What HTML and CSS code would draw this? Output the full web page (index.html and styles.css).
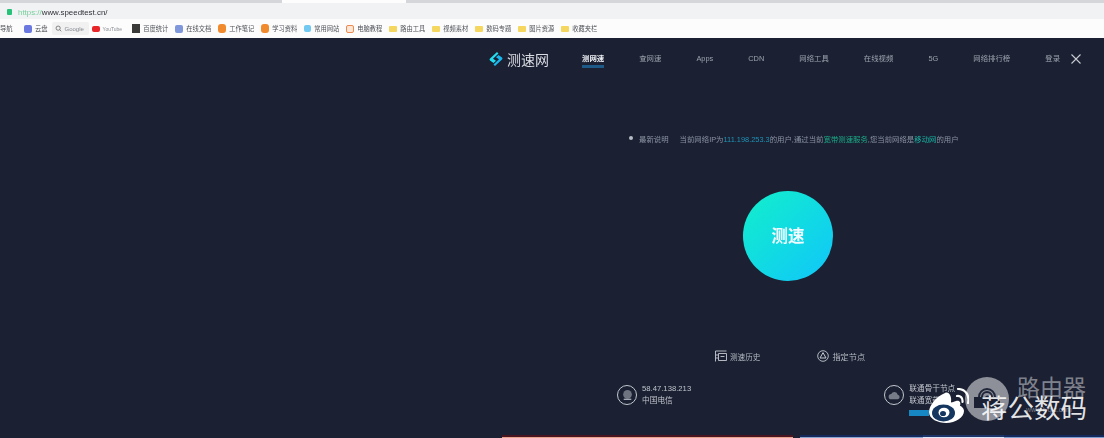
FILE: index.html
```html
<!DOCTYPE html>
<html lang="zh-CN">
<head>
<meta charset="UTF-8">
<title>测速网</title>
<link rel="stylesheet" href="styles.css">
</head>
<body>

<div id="shot">
  <div id="tabstrip"><div class="tab"></div></div>

  <div id="addressbar">
    <span class="lock"></span>
    <span class="url"><span class="scheme">https://</span>www.speedtest.cn/</span>
  </div>

  <div id="bookmarks">
    <span class="mark cut">导航</span>
    <span class="mark"><i class="ico blue"></i>云盘</span>
    <span class="mark google"><svg class="ico-g" viewBox="0 0 10 10"><circle cx="4.5" cy="4.5" r="3" fill="none" stroke="#666" stroke-width="1.1"/><path d="M6.7 6.7 9 9" stroke="#666" stroke-width="1.1"/></svg>Google</span>
    <span class="mark latin"><i class="ico red"></i>YouTube</span>
    <span class="mark"><i class="ico qr"></i>百度统计</span>
    <span class="mark"><i class="ico doc"></i>在线文档</span>
    <span class="mark"><i class="ico orange"></i>工作笔记</span>
    <span class="mark"><i class="ico orange"></i>学习资料</span>
    <span class="mark"><i class="ico sky"></i>常用网站</span>
    <span class="mark"><i class="ico frame"></i>电脑教程</span>
    <span class="mark"><i class="ico folder"></i>路由工具</span>
    <span class="mark"><i class="ico folder"></i>视频素材</span>
    <span class="mark"><i class="ico folder"></i>数码专题</span>
    <span class="mark"><i class="ico folder"></i>图片资源</span>
    <span class="mark"><i class="ico folder"></i>收藏夹栏</span>
  </div>

  <div id="main">
    <div id="page">
      <div id="header">
        <div class="logo">
          <svg class="logo-ico" viewBox="0 0 14 14">
            <path d="M8 0 1 6.5Q0 7.5 1 8.5L4.500 11 7 8.800 4 6.800 9.500 1.500Z" fill="#23dced"/>
            <path d="M6 14 13 7.500Q14 6.500 13 5.500L9.500 3 7 5.200 10 7.200 4.500 12.500Z" fill="#18b8ee"/>
          </svg>
          <span>测速网</span>
        </div>
        <nav class="nav">
          <a class="active">测网速</a>
          <a>查网速</a>
          <a>Apps</a>
          <a>CDN</a>
          <a>网络工具</a>
          <a>在线视频</a>
          <a>5G</a>
          <a>网络排行榜</a>
          <a>登录</a>
        </nav>
        <svg class="close" viewBox="0 0 10 10"><path d="M.5.5l9 9M9.5.5l-9 9" stroke="#c9ccd3" stroke-width="1.1"/></svg>
      </div>

      <div class="notice">
        <span class="dot"></span>
        <span class="notice-head">最新说明</span>
        <span>当前网络IP为<b class="blue-t">111.198.253.3</b>的用户,通过当前<b class="green-t">宽带测速服务</b>,您当前网络是<b class="teal-t">移动网</b>的用户</span>
      </div>

      <button class="go">测速</button>

      <div class="tools">
        <span class="tool">
          <svg viewBox="0 0 12 12"><path d="M.5 1h11M.5 1v10.500M3.500 3.500h8v7h-8zM.5 5h3M.5 8h3M5.500 6.500h4" fill="none" stroke="#c4c8d0" stroke-width=".9"/></svg>
          测速历史
        </span>
        <span class="tool">
          <svg viewBox="0 0 12 12"><circle cx="6" cy="6" r="5.300" fill="none" stroke="#c4c8d0" stroke-width=".9"/><path d="M6 2.600 9 8H3Z" fill="none" stroke="#c4c8d0" stroke-width="1"/></svg>
          <span class="wide">指定节点</span>
        </span>
      </div>

      <div class="status">
        <div class="stat">
          <span class="ring"><svg viewBox="0 0 12 12"><circle cx="6" cy="5" r="4" fill="#6e7480"/><path d="M2.500 9.500h7" stroke="#aab0ba" stroke-width="1.2"/></svg></span>
          <div class="stat-text">
            <span>58.47.138.213</span>
            <span>中国电信</span>
          </div>
        </div>
        <div class="stat">
          <span class="ring"><svg viewBox="0 0 12 12"><path d="M3 9.500a2.400 2.400 0 0 1 0-4.800 3.200 3.200 0 0 1 6 .5 2.200 2.200 0 0 1 0 4.300Z" fill="#767c88"/></svg></span>
          <div class="stat-text">
            <span>联通骨干节点</span>
            <span>联通宽带</span>
            <span class="change"></span>
          </div>
        </div>
      </div>
    </div>
  </div>

  <div id="nextshot">
    <i class="seg s-dark"></i>
    <i class="seg s-red"></i>
    <i class="seg s-gap"></i>
    <i class="seg s-blue"></i>
    <i class="seg s-pale"></i>
    <i class="seg s-blue2"></i>
  </div>
</div>

<!-- watermark sits on top of the screenshot -->
<div class="wm-badge">
  <svg viewBox="0 0 44 44"><path d="M17 20a5 5 0 0 1 10 0M14 20a8 8 0 0 1 16 0v0M21 21a1.500 1.500 0 0 1 3 0" fill="none" stroke="#20263a" stroke-width="2"/></svg>
</div>
<div class="wm-box"></div>
<div class="wm-weibo">
  <svg viewBox="0 0 40 36">
    <path d="M16 5C8 8 0 17 0 24c0 7 9 11 17 11 10 0 18-6 18-12 0-3-3-5-4-5 1-3 0-6-4-5-3 1-5 2-5 1 1-5-2-11-6-9Z" fill="#fff"/>
    <ellipse cx="14.500" cy="25" rx="11.500" ry="8.500" fill="#14365f"/>
    <ellipse cx="15" cy="24.500" rx="5.500" ry="4.800" fill="#fff"/>
    <ellipse cx="14" cy="25.500" rx="3" ry="2.600" fill="#14365f"/>
    <path d="M28 8c3-.5 6 1.500 5.500 6M29 1c7 0 12 6 10 14" fill="none" stroke="#fff" stroke-width="2.200" stroke-linecap="round"/>
  </svg>
</div>
<div class="wm-sub">路由器</div>
<div class="wm-main">蒋公数码</div>
<div class="wm-url">www.lyqjc.com</div>

</body>
</html>
```

FILE: styles.css
```css
* { margin: 0; padding: 0; box-sizing: border-box; }

html, body { height: 100%; overflow: hidden; }

body {
  font-family: "Liberation Sans", "Noto Sans CJK SC", sans-serif;
  background: #1b2032;
  position: relative;
}

/* the reference is a blown up photo of a screen, everything is a bit soft */
#shot {
  height: 100vh;
  display: flex;
  flex-direction: column;
  filter: blur(0.45px);
}

#tabstrip {
  height: 3px;
  background: #d4d6da;
  padding-left: 282px;
  flex-shrink: 0;
}
.tab { width: 124px; height: 3px; background: #fdfdfd; }

#addressbar {
  height: 16px;
  padding-top: 2px;
  background: #f1f2f4;
  display: flex;
  align-items: center;
  gap: 6px;
  padding-left: 7px;
  flex-shrink: 0;
}
.lock { width: 5px; height: 6px; border-radius: 1px; background: #27c27a; }
.url { font-size: 7.9px; color: #2e3035; }
.scheme { color: #77cf9c; }

#bookmarks {
  height: 19px;
  background: #fcfcfc;
  display: flex;
  align-items: center;
  gap: 7px;
  flex-shrink: 0;
}
.mark {
  display: flex;
  align-items: center;
  gap: 3px;
  font-size: 6.25px;
  color: #4e5157;
  white-space: nowrap;
}
.mark.latin { color: #8a8d92; font-size: 5px; }
.mark.cut { width: 17px; }
.google {
  width: 37px;
  height: 13px;
  padding-left: 3px;
  background: #f1f1f2;
  border-radius: 2px;
  color: #85888e;
  font-size: 6px;
  margin-left: -3px;
  margin-right: -4px;
}
.ico-g { width: 7px; height: 7px; }
.ico { width: 8px; height: 8px; display: block; border-radius: 2px; }
.ico.blue { background: #6a78e0; }
.ico.red { background: #e8262a; height: 6px; border-radius: 2px; }
.ico.qr { background: #3a3a38; height: 9px; border-radius: 0; margin-left: 3px; }
.ico.doc { background: #7f98dc; }
.ico.orange { background: #f08a2c; border-radius: 3px; height: 9px; }
.ico.sky { background: #71c8f0; width: 7px; height: 7px; }
.ico.frame { background: #fbe6d8; border: 1.5px solid #ee8a50; }
.ico.folder { background: #f5d65e; height: 6px; border-radius: 1px; }

#main { flex: 1; background: #1b2032; min-height: 0; }

#page { width: 632px; margin-left: auto; }

#header {
  height: 42px;
  display: flex;
  align-items: center;
  padding-left: 17px;
}
.logo { display: flex; align-items: center; gap: 4px; }
.logo-ico { width: 14px; height: 14px; }
.logo span { font-size: 14px; color: #d9dce3; }

.nav {
  display: flex;
  align-items: center;
  gap: 35px;
  margin-left: 33px;
}
.nav a {
  font-size: 7.4px;
  line-height: 10px;
  color: #9da2ae;
  padding: 3px 0 1px;
  border-bottom: 3px solid transparent;
  white-space: nowrap;
}
.nav a.active {
  color: #eef0f4;
  font-weight: bold;
  border-bottom-color: #1d5a88;
}
.close { width: 10px; height: 10px; margin-left: 11px; }

.notice {
  display: flex;
  align-items: center;
  height: 10px;
  margin-top: 53px;
  padding-left: 157px;
  font-size: 7.4px;
  color: #8b93a3;
  white-space: nowrap;
}
.notice b { font-weight: normal; }
.dot { width: 4px; height: 4px; border-radius: 50%; background: #b7bcc6; margin-right: 6px; }
.notice-head { margin-right: 11px; }
.blue-t { color: #1f93b8; }
.green-t { color: #1bab88; }
.teal-t { color: #19b5a4; }

.go {
  display: block;
  width: 90px;
  height: 90px;
  margin: 48px auto 0;
  padding-bottom: 3px;
  border: none;
  border-radius: 50%;
  background: linear-gradient(135deg, #12efcb, #10c6fa);
  color: #f2fbff;
  font-family: inherit;
  font-size: 16.5px;
  font-weight: bold;
}

.tools {
  display: flex;
  gap: 57px;
  height: 12px;
  margin-top: 69px;
  padding-left: 243px;
}
.tool {
  display: flex;
  align-items: center;
  gap: 3px;
  font-size: 7.6px;
  color: #b3b7c0;
}
.tool .wide { font-size: 8.2px; }
.tool svg { width: 12px; height: 12px; }

.status {
  display: flex;
  gap: 193px;
  margin-top: 22px;
  padding-left: 145px;
}
.stat { display: flex; gap: 5px; align-items: flex-start; }
.ring {
  width: 20px;
  height: 20px;
  margin-top: 1px;
  border: 1px solid #c3c7cf;
  border-radius: 50%;
  display: flex;
  align-items: center;
  justify-content: center;
}
.ring svg { width: 13px; height: 13px; }
.stat-text {
  display: flex;
  flex-direction: column;
  gap: 2px;
  font-size: 7.7px;
  line-height: 10px;
  color: #c0c4cc;
}
.change { width: 20px; height: 6px; margin-top: 2px; background: #1788c4; }

#nextshot {
  height: 3px;
  display: flex;
  flex-shrink: 0;
}
.seg { display: block; height: 3px; border-top: 2px solid; }
.s-dark { width: 502px; background: #1b2032; border-color: #1b2032; }
.s-red { width: 291px; background: #e9a48e; border-color: #4a1520; }
.s-gap { width: 7px; background: #1b2032; border-color: #1b2032; }
.s-blue { width: 123px; background: #8aa6d0; border-color: #14285c; }
.s-pale { width: 81px; background: #dce6f6; border-color: #1d3468; }
.s-blue2 { flex: 1; background: #7b9ccc; border-color: #14285c; }

/* watermark */
.wm-weibo { position: absolute; left: 929px; top: 388px; width: 40px; height: 36px; }
.wm-weibo svg { width: 100%; height: 100%; display: block; }
.wm-badge {
  position: absolute;
  left: 965px;
  top: 377px;
  width: 44px;
  height: 44px;
  border-radius: 50%;
  background: rgba(255, 255, 255, 0.5);
}
.wm-badge svg { width: 100%; height: 100%; display: block; }
.wm-box { position: absolute; left: 974px; top: 397px; width: 26px; height: 11px; background: #1b2032; }
.wm-sub {
  position: absolute;
  left: 1017px;
  top: 375px;
  font-size: 23px;
  line-height: 26px;
  color: rgba(255, 255, 255, 0.45);
}
.wm-main {
  position: absolute;
  left: 981px;
  top: 394px;
  font-size: 26.5px;
  line-height: 30px;
  color: rgba(255, 255, 255, 0.88);
  white-space: nowrap;
}
.wm-url {
  position: absolute;
  left: 1026px;
  top: 406px;
  font-size: 7px;
  color: rgba(255, 255, 255, 0.4);
}
```
